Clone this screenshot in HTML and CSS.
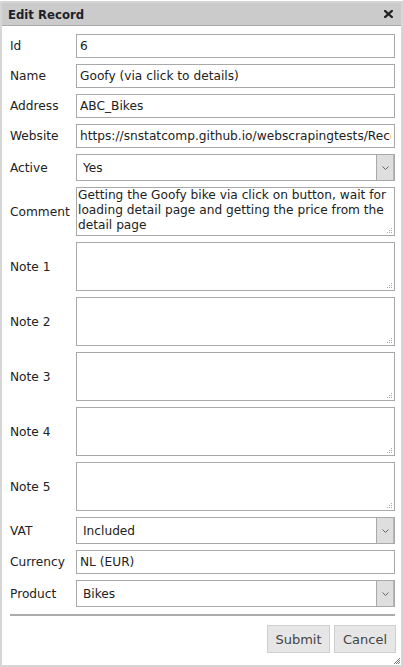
FILE: index.html
```html
<!DOCTYPE html>
<html>
<head>
<meta charset="utf-8">
<link rel="stylesheet" href="styles.css">
</head>
<body>
<div class="dialog">
  <div class="titlebar">
    <span class="title">Edit Record</span>
    <svg class="close" width="9" height="8" viewBox="0 0 9 8"><path d="M1.2 1 L7.8 7 M7.8 1 L1.2 7" stroke="#222" stroke-width="2.3" stroke-linecap="square"/></svg>
  </div>
  <form class="form">
    <label class="lbl">Id</label>
    <input class="field" type="text" value="6">
    <label class="lbl">Name</label>
    <input class="field" type="text" value="Goofy (via click to details)">
    <label class="lbl">Address</label>
    <input class="field" type="text" value="ABC_Bikes">
    <label class="lbl">Website</label>
    <input class="field" type="text" value="https://snstatcomp.github.io/webscrapingtests/RecordDetails.html">
    <label class="lbl">Active</label>
    <div class="select"><select><option>Yes</option></select><span class="arrow"><svg width="7" height="4" viewBox="0 0 7 4"><path d="M0.5 0.5 L3.5 3.5 L6.5 0.5" fill="none" stroke="#666" stroke-width="1"/></svg></span></div>
    <label class="lbl">Comment</label>
    <textarea class="area">Getting the Goofy bike via click on button, wait for loading detail page and getting the price from the detail page</textarea>
    <label class="lbl">Note 1</label>
    <textarea class="area"></textarea>
    <label class="lbl">Note 2</label>
    <textarea class="area"></textarea>
    <label class="lbl">Note 3</label>
    <textarea class="area"></textarea>
    <label class="lbl">Note 4</label>
    <textarea class="area"></textarea>
    <label class="lbl">Note 5</label>
    <textarea class="area"></textarea>
    <label class="lbl">VAT</label>
    <div class="select"><select><option>Included</option></select><span class="arrow"><svg width="7" height="4" viewBox="0 0 7 4"><path d="M0.5 0.5 L3.5 3.5 L6.5 0.5" fill="none" stroke="#666" stroke-width="1"/></svg></span></div>
    <label class="lbl">Currency</label>
    <input class="field" type="text" value="NL (EUR)">
    <label class="lbl">Product</label>
    <div class="select"><select><option>Bikes</option></select><span class="arrow"><svg width="7" height="4" viewBox="0 0 7 4"><path d="M0.5 0.5 L3.5 3.5 L6.5 0.5" fill="none" stroke="#666" stroke-width="1"/></svg></span></div>
  </form>
  <div class="sep"></div>
  <div class="buttons">
    <button class="btn submit" type="button">Submit</button>
    <button class="btn cancel" type="button">Cancel</button>
  </div>
  <svg class="grip" width="6" height="6" viewBox="0 0 6 6"><path d="M6 0 L0 6 M6 2 L2 6 M6 4 L4 6" stroke="#555" stroke-width="0.8"/></svg>
</div>
</body>
</html>
```

FILE: styles.css
```css
html, body {
  margin: 0;
  padding: 0;
  background: #fff;
}
body {
  font-family: "DejaVu Sans", sans-serif;
  font-size: 12.2px;
  color: #222;
}
.dialog {
  position: relative;
  box-sizing: border-box;
  width: 403px;
  height: 666px;
  margin-top: 1px;
  border: 2px solid #d6d6d6;
  display: flex;
  flex-direction: column;
}
.titlebar {
  height: 22px;
  background: #cbcbcb;
  border-bottom: 1px solid #a8a8a8;
  display: flex;
  align-items: center;
  justify-content: space-between;
  padding: 0 8px 0 6px;
}
.title {
  font-family: "DejaVu Sans Condensed", "DejaVu Sans", sans-serif;
  font-weight: bold;
  font-size: 13px;
  color: #1f1f2a;
}
.form {
  margin: 0;
  padding: 8px 6px 0 8px;
  display: grid;
  grid-template-columns: 66px 1fr;
  row-gap: 6px;
  align-items: center;
}
.lbl {
  color: #222;
}
.field {
  box-sizing: border-box;
  height: 24px;
  border: 1px solid #a9a9a9;
  padding: 0 3px;
  font: inherit;
  color: #222;
  outline: none;
  width: 100%;
  min-width: 0;
}
.area {
  box-sizing: border-box;
  height: 49px;
  border: 1px solid #a9a9a9;
  padding: 0 1px;
  font: inherit;
  line-height: 15px;
  color: #222;
  outline: none;
  width: 100%;
  min-width: 0;
  overflow: hidden;
  resize: none;
  background-color: #fff;
  background-image:
    linear-gradient(#aaa, #aaa), linear-gradient(#aaa, #aaa), linear-gradient(#aaa, #aaa),
    linear-gradient(#aaa, #aaa), linear-gradient(#aaa, #aaa), linear-gradient(#aaa, #aaa);
  background-size: 1px 1px;
  background-repeat: no-repeat;
  background-position:
    right 2px bottom 2px, right 4px bottom 2px, right 6px bottom 2px,
    right 2px bottom 4px, right 4px bottom 4px, right 2px bottom 6px;
}
.select {
  box-sizing: border-box;
  height: 27px;
  border: 1px solid #a9a9a9;
  display: flex;
  align-items: stretch;
}
.select select {
  appearance: none;
  -webkit-appearance: none;
  flex: 1;
  min-width: 0;
  border: none;
  background: #fff;
  font: inherit;
  color: #222;
  padding: 0 6px;
  outline: none;
}
.arrow {
  width: 16px;
  background: #dedede;
  border-left: 1px solid #a9a9a9;
  border-right: 1px solid #b5b5b5;
  display: flex;
  align-items: center;
  justify-content: center;
}
.sep {
  margin: 7px 6px 0 8px;
  height: 2px;
  background: #ababab;
}
.buttons {
  display: flex;
  justify-content: flex-end;
  gap: 4px;
  padding: 9px 5px 0 0;
}
.btn {
  box-sizing: border-box;
  height: 28px;
  padding: 0;
  background: #e6e6e6;
  border: 1px solid #cfcfcf;
  font: inherit;
  font-size: 13px;
  color: #444;
}
.submit {
  width: 63px;
}
.cancel {
  width: 62px;
}
.grip {
  position: absolute;
  right: 1px;
  bottom: 1px;
}
```
